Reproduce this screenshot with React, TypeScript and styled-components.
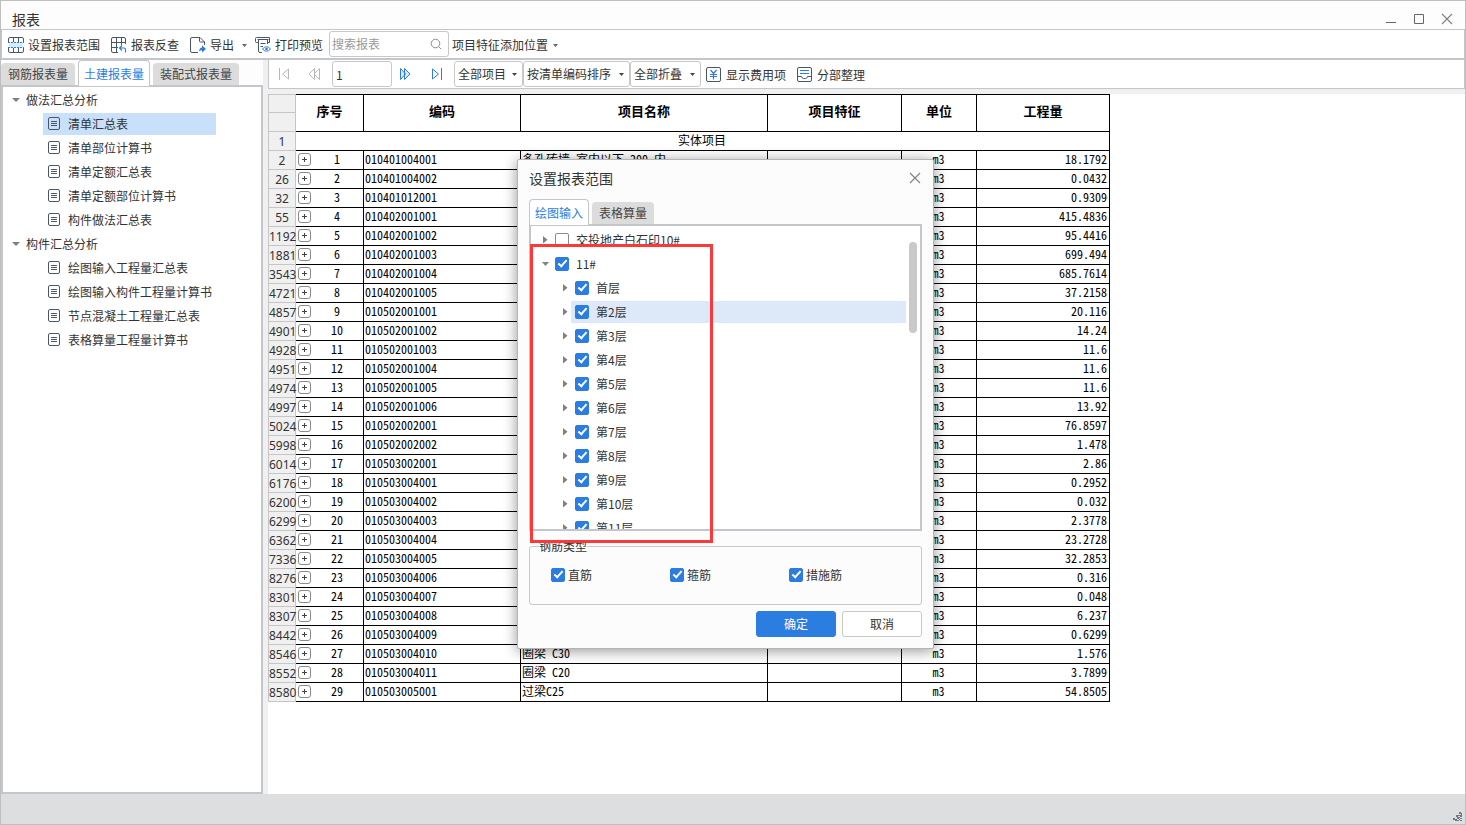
import React from 'react';
import styled, { createGlobalStyle, css } from 'styled-components';

const line = '#c5c6cc';
const blue = '#2b7de1';
const ink = '#4a5568';

const GlobalStyle = createGlobalStyle`
  *, *::before, *::after { box-sizing: border-box; }
  body { margin: 0; }
  body, button, input, select {
    font-family: "Noto Sans CJK SC", "Noto Sans", sans-serif;
    font-size: 12px;
    line-height: 18px;
    color: #333;
  }
`;

const Window = styled.div`
  position: relative;
  display: flex;
  flex-direction: column;
  min-height: 100vh;
  border: 1px solid #bfbfbf;
  background: #fdfdfd;
`;

const TitleBar = styled.header`
  display: flex;
  align-items: center;
  justify-content: space-between;
  height: 28px;
  padding: 8px 12px 0 11px;
`;

const WindowTitle = styled.h1`
  margin: 0;
  font-size: 14px;
  font-weight: 400;
  line-height: 20px;
`;

const WindowButtons = styled.div`
  display: flex;
  gap: 16px;
`;

const IconButton = styled.button`
  display: flex;
  padding: 0;
  border: 0;
  background: none;
`;

const Toolbar = styled.div`
  display: flex;
  align-items: center;
  height: 31px;
  padding: 0 6px;
  border: 1px solid ${line};
  border-bottom-width: 2px;
  background: #fff;
`;

const ToolButton = styled.button<{ $gap?: number; $after?: number }>`
  display: flex;
  align-items: center;
  gap: ${p => p.$gap ?? 4}px;
  margin-right: ${p => p.$after ?? 11}px;
  padding: 2px 0 0;
  border: 0;
  background: none;
  white-space: nowrap;
`;

const SearchBox = styled.label`
  display: flex;
  align-items: center;
  width: 120px;
  height: 26px;
  margin-right: 3px;
  padding: 0 6px 0 2px;
  border: 1px solid #c8c8c8;
  border-radius: 3px;
  background: #fff;
`;

const SearchInput = styled.input`
  flex: 1;
  min-width: 0;
  padding: 0;
  border: 0;
  outline: 0;
  background: none;
  &::placeholder { color: #9a9a9a; opacity: 1; }
`;

const Body = styled.div`
  display: flex;
  flex: 1;
  background: #f0f0f0;
`;

const Sidebar = styled.aside`
  display: flex;
  flex-direction: column;
  flex: 0 0 262px;
  margin-right: 5px;
  background: #fdfdfd;
`;

const TabList = styled.div`
  display: flex;
  align-items: flex-end;
  gap: 3px;
  height: 25px;
`;

const Tab = styled.button<{ $active?: boolean }>`
  height: 22px;
  padding: 0 7px;
  border: 0;
  border-radius: 4px 4px 0 0;
  background: #dcdcdc;
  color: #444;
  white-space: nowrap;
  ${p => p.$active && css`
    position: relative;
    height: 26px;
    margin-bottom: -1px;
    padding: 0 5px;
    border: 1px solid ${line};
    border-bottom: 0;
    background: #fff;
    color: ${blue};
  `}
`;

const TreePanel = styled.nav`
  flex: 1;
  padding: 1px 0;
  border: 2px solid ${line};
  background: #fff;
`;

const TreeGroup = styled.div`
  display: flex;
  align-items: center;
  gap: 6px;
  height: 24px;
  padding-left: 9px;
`;

const TreeList = styled.ul`
  margin: 0;
  padding: 0 45px 0 40px;
  list-style: none;
`;

const TreeLink = styled.a<{ $active?: boolean }>`
  display: flex;
  align-items: center;
  gap: 7px;
  height: 22px;
  margin: 1px 0;
  padding-left: 5px;
  color: #333;
  text-decoration: none;
  white-space: nowrap;
  background: ${p => (p.$active ? '#c9e0fa' : 'transparent')};
`;

const TreeItem = styled.li`
  display: flow-root;
`;

const Main = styled.main`
  display: flex;
  flex-direction: column;
  flex: 1;
  min-width: 0;
`;

const PagerBar = styled.div`
  display: flex;
  align-items: center;
  height: 29px;
  margin-bottom: 5px;
  padding-left: 8px;
  border: 1px solid ${line};
  border-top: 0;
  background: #fff;
`;

const PageInput = styled.input`
  width: 60px;
  height: 26px;
  margin: 0 6px 0 11px;
  padding: 0 3px;
  border: 1px solid #c8c8c8;
  border-radius: 3px;
`;

const PagerButton = styled(IconButton)<{ $after?: number }>`
  justify-content: center;
  width: 15px;
  margin-right: ${p => p.$after ?? 16}px;
`;

const Filters = styled.div`
  display: flex;
  margin-right: 5px;
`;

const SelectBox = styled.span<{ $width: number }>`
  position: relative;
  width: ${p => p.$width}px;
  height: 26px;
  > svg { position: absolute; right: 6px; top: 12px; pointer-events: none; }
`;

const Select = styled.select`
  appearance: none;
  width: 100%;
  height: 26px;
  padding: 0 3px;
  border: 1px solid #c8c8c8;
  border-radius: 3px;
  background: #fff;
`;

const Sheet = styled.section`
  flex: 1;
  background: #fff;
`;

const Grid = styled.table`
  table-layout: fixed;
  width: 842px;
  border-spacing: 0;
  color: #000;
  font-feature-settings: "hwid";
  line-height: 16px;
  tr { height: 19px; }
`;

const Cell = styled.td<{ $align?: string }>`
  padding: 0 2px 2px 1px;
  border-right: 1px solid #000;
  border-bottom: 1px solid #000;
  text-align: ${p => p.$align ?? 'left'};
  white-space: nowrap;
`;

const HeadCell = styled.th`
  padding: 0 0 4px;
  border: solid #000;
  border-width: 1px 1px 1px 0;
  font-size: 13px;
`;

const RowNumber = styled.th<{ $first?: boolean }>`
  padding: 2px 0 0;
  border: solid #c6c6c6;
  border-width: ${p => (p.$first ? 1 : 0)}px 1px 1px 1px;
  background: #f0f0f0;
  color: #333;
  font-family: "Noto Sans", sans-serif;
  font-weight: 400;
`;

const Ordinal = styled.div`
  display: flex;
  align-items: center;
  padding-left: 1px;
  span { flex: 1; padding-left: 2px; text-align: center; }
`;

const ExpandButton = styled.button`
  display: flex;
  align-items: center;
  justify-content: center;
  width: 13px;
  height: 13px;
  margin-top: 1px;
  padding: 0;
  border: 1px solid #8a8a8a;
  border-radius: 3px;
  background: #fff;
`;

const StatusBar = styled.footer`
  display: flex;
  justify-content: flex-end;
  align-items: flex-end;
  height: 30px;
  padding: 2px;
  background: #dddee0;
`;

const Dialog = styled.div`
  position: absolute;
  left: calc(50% - 216px);
  top: 158px;
  display: flex;
  flex-direction: column;
  width: 417px;
  padding: 0 11px 11px;
  border: 1px solid #b4b4b4;
  border-radius: 2px;
  background: #fcfcfc;
  box-shadow: 0 2px 14px rgba(0, 0, 0, 0.42);
`;

const DialogHeader = styled.div`
  display: flex;
  align-items: center;
  justify-content: space-between;
  height: 39px;
  padding: 0 1px 4px 0;
`;

const DialogTitle = styled.h2`
  margin: 0;
  font-size: 14px;
  font-weight: 400;
  line-height: 20px;
`;

const FloorPanel = styled.div`
  display: flex;
  height: 307px;
  padding: 2px 3px 0 0;
  border: 2px solid ${line};
  background: #fff;
  overflow: hidden;
`;

const FloorList = styled.ul`
  flex: 1;
  margin: 0;
  padding: 0;
  list-style: none;
`;

const FloorRow = styled.li<{ $level: number }>`
  display: flex;
  align-items: center;
  gap: 2px;
  height: 24px;
  padding-left: ${p => p.$level * 20 + 11}px;
`;

const FloorLabel = styled.label<{ $active?: boolean }>`
  display: flex;
  flex: 1;
  align-items: center;
  gap: 7px;
  height: 22px;
  padding-left: 4px;
  background: ${p => (p.$active ? '#dde9f9' : 'transparent')};
`;

const Checkbox = styled.input.attrs({ type: 'checkbox' })`
  appearance: none;
  width: 14px;
  height: 14px;
  margin: 0;
  border: 1px solid #8a8a8a;
  border-radius: 2px;
  background: #fff;
  &:checked {
    border-color: ${blue};
    background: ${blue};
  }
  &:checked::after {
    content: '';
    display: block;
    width: 5px;
    height: 9px;
    margin: 0 0 0 4px;
    border: solid #fff;
    border-width: 0 2px 2px 0;
    transform: rotate(42deg);
  }
`;

const ScrollThumb = styled.div`
  width: 8px;
  height: 91px;
  margin: 14px 0 0 3px;
  border-radius: 4px;
  background: #c9c9c9;
`;

const RebarTypes = styled.fieldset`
  display: flex;
  min-width: 0;
  height: 68px;
  margin: 6px 0;
  padding: 11px 0 0 21px;
  border: 1px solid #c8c8c8;
  border-radius: 3px;
  background: transparent;
`;

const Legend = styled.legend`
  margin-left: -12px;
  padding: 0;
`;

const RebarLabel = styled.label`
  display: flex;
  align-items: center;
  gap: 3px;
  width: 119px;
  height: 18px;
`;

const DialogActions = styled.div`
  display: flex;
  justify-content: flex-end;
  gap: 6px;
`;

const ActionButton = styled.button<{ $primary?: boolean }>`
  width: 80px;
  height: 26px;
  padding: 0;
  border: 1px solid ${p => (p.$primary ? blue : '#c8c8c8')};
  border-radius: 3px;
  background: ${p => (p.$primary ? blue : '#fff')};
  color: ${p => (p.$primary ? '#fff' : '#333')};
`;

const Highlight = styled.div`
  position: absolute;
  left: 12px;
  top: 84px;
  width: 183px;
  height: 299px;
  border: 3px solid #fd3838;
  pointer-events: none;
`;

const CaretDown = ({ size = 5, color = '#666' }: { size?: number; color?: string }) => (
  <svg width={size} height={size === 5 ? 3 : 4} viewBox="0 0 8 4" preserveAspectRatio="none">
    <path d="M0 0h8L4 4z" fill={color} />
  </svg>
);

const CaretRight = () => (
  <svg width="7" height="8" viewBox="0 0 7 8"><path d="M1 0v7.500l4.500-3.750z" fill="#808080" /></svg>
);

const CaretOpen = () => (
  <svg width="7" height="8" viewBox="0 0 7 8"><path d="M0 2h7L3.500 6z" fill="#808080" /></svg>
);

const Cross = () => (
  <svg width="12" height="12" viewBox="0 0 12 12"><path d="M1 1l10 10M11 1L1 11" stroke="#808080" strokeWidth="1.100" /></svg>
);

const RangeIcon = () => (
  <svg width="16" height="16" viewBox="0 0 16 16" fill="none">
    <path d="M1 5h14v6H1z" fill="#dcebfc" />
    <path d="M.5 5V2Q.5.5 2 .5h12q1.500 0 1.500 1.500v3M.5 11v3q0 1.500 1.500 1.500h12q1.500 0 1.500-1.500v-3M5.500.5V5M10.500.5V5M5.500 11v4.500M10.500 11v4.500" stroke={ink} />
    <path d="M0 5.500h16M0 10.500h16" stroke={blue} strokeDasharray="2 1" />
  </svg>
);

const LookupIcon = () => (
  <svg width="16" height="16" viewBox="0 0 16 16" fill="none">
    <path d="M14.500 7V2Q14.500.5 13 .5H2Q.5.5.5 2v12q0 1.500 1.500 1.500h5M.5 5.500h14M.5 10.500H7M5.500.5v15M10.500.5V8" stroke={ink} />
    <path d="M11 8.500L8.500 11l2.500 2.500M9 11h4q1.500 0 1.500 1.500v3" stroke={blue} strokeWidth="1.200" />
  </svg>
);

const ExportIcon = () => (
  <svg width="16" height="16" viewBox="0 0 16 16" fill="none">
    <path d="M8 15.500H2Q.5 15.500.5 14V2Q.5.5 2 .5h8L14.500 5v3M9.500.5V4q0 1 1 1h4" stroke={ink} />
    <path d="M9 14.500q.5-4 3-4V8.300l4 3.700-4 3.500v-2.300q-1.800 0-3 1.300z" fill={blue} />
  </svg>
);

const PreviewIcon = () => (
  <svg width="16" height="16" viewBox="0 0 16 16" fill="none">
    <path d="M3 5.500H1.500Q.5 5.500.5 4.500v-3q0-1 1-1h13v5H12M3.500 3v11q0 1.500 1.500 1.500h2M12.500 3v4M2.500 2.500h11M5.500 6.500h5M5.500 9.500H8" stroke={ink} />
    <path d="M7.500 12q4-4.500 8 0-4 4.500-8 0z" fill="#fff" stroke={blue} />
    <circle cx="11.500" cy="12" r="1.300" fill={blue} />
  </svg>
);

const FeeIcon = () => (
  <svg width="16" height="16" viewBox="0 0 16 16" fill="none">
    <rect x=".5" y=".5" width="14" height="14" rx="1.500" stroke={ink} />
    <path d="M4.500 3l3 3.500 3-3.500M7.500 6.500v6M4 7.500h7M4 9.500h7" stroke={blue} strokeWidth="1.200" />
  </svg>
);

const ArrangeIcon = () => (
  <svg width="16" height="16" viewBox="0 0 16 16" fill="none">
    <rect x=".5" y=".5" width="14" height="14" rx="1.500" stroke={ink} />
    <path d="M.5 9.500h4q.5 2 2 2h2q1.500 0 2-2h4" stroke={ink} />
    <path d="M3 3.500h9M3 6.500h9" stroke={blue} strokeWidth="1.200" />
  </svg>
);

const SheetIcon = () => (
  <svg width="13" height="15" viewBox="0 0 13 15" fill="none" stroke={ink}>
    <rect x=".5" y=".5" width="11" height="12" rx="1.500" />
    <path d="M3 4.500h6M3 6.500h6M3 8.500h6" />
  </svg>
);

const SearchIcon = () => (
  <svg width="12" height="12" viewBox="0 0 12 12" fill="none" stroke="#8c8c8c">
    <circle cx="5.500" cy="5.500" r="4.300" />
    <path d="M8.700 8.700l2.300 2.300" />
  </svg>
);

const NavIcon = ({ kind }: { kind: 'first' | 'prev' | 'next' | 'last' }) => {
  const back = kind === 'first' || kind === 'prev';
  return (
    <svg width="13" height="14" viewBox="0 0 13 14" fill="none" stroke={back ? '#b8b8b8' : blue}>
      {kind === 'first' && <path d="M1.500 1v12M10.500 2v10L4.500 7z" />}
      {kind === 'prev' && <path d="M6.500 1.500L1 7l5.500 5.500zM11.500 1.500L6 7l5.500 5.500z" />}
      {kind === 'next' && <path d="M1.500 1.500v11L6.500 7zM5.500 1.500L11 7l-5.500 5.500z" fill="#dcebfc" />}
      {kind === 'last' && <path d="M11.500 1v12M2.500 2v10L8.500 7z" />}
    </svg>
  );
};

const Grip = () => (
  <svg width="10" height="10" viewBox="0 0 10 10">
    <path d="M6 0h2v2H6zM8 1h1v2H8zM5 3h2v1H5zM3 3h2v2H3zM7 3h2v2H7zM4 5h2v2H4zM6 5h1v1H6zM7 6h2v1H7zM0 6h2v2H0zM2 7h2v2H2zM4 8h2v1H4zM6 7h1v1H6zM7 8h2v1H7z" fill="#6d7785" />
  </svg>
);

const groups = [
  { name: '做法汇总分析', items: ['清单汇总表', '清单部位计算书', '清单定额汇总表', '清单定额部位计算书', '构件做法汇总表'] },
  { name: '构件汇总分析', items: ['绘图输入工程量汇总表', '绘图输入构件工程量计算书', '节点混凝土工程量汇总表', '表格算量工程量计算书'] },
];

const rows: [string, string, string, string?][] = [
  ['2', '010401004001', '18.1792', '多孔砖墙 室内以下 200 内'],
  ['26', '010401004002', '0.0432'],
  ['32', '010401012001', '0.9309'],
  ['55', '010402001001', '415.4836'],
  ['1192', '010402001002', '95.4416'],
  ['1881', '010402001003', '699.494'],
  ['3543', '010402001004', '685.7614'],
  ['4721', '010402001005', '37.2158'],
  ['4857', '010502001001', '20.116'],
  ['4901', '010502001002', '14.24'],
  ['4928', '010502001003', '11.6'],
  ['4951', '010502001004', '11.6'],
  ['4974', '010502001005', '11.6'],
  ['4997', '010502001006', '13.92'],
  ['5024', '010502002001', '76.8597'],
  ['5998', '010502002002', '1.478'],
  ['6014', '010503002001', '2.86'],
  ['6176', '010503004001', '0.2952'],
  ['6200', '010503004002', '0.032'],
  ['6299', '010503004003', '2.3778'],
  ['6362', '010503004004', '23.2728'],
  ['7336', '010503004005', '32.2853'],
  ['8276', '010503004006', '0.316'],
  ['8301', '010503004007', '0.048'],
  ['8307', '010503004008', '6.237'],
  ['8442', '010503004009', '0.6299'],
  ['8546', '010503004010', '1.576', '圈梁 C30'],
  ['8552', '010503004011', '3.7899', '圈梁 C20'],
  ['8580', '010503005001', '54.8505', '过梁C25'],
];

const floors = ['首层', '第2层', '第3层', '第4层', '第5层', '第6层', '第7层', '第8层', '第9层', '第10层', '第11层'];

const DropDown = ({ label, width }: { label: string; width: number }) => (
  <SelectBox $width={width}>
    <Select aria-label={label}><option>{label}</option></Select>
    <CaretDown color="#444" />
  </SelectBox>
);

const ReportSidebar = () => (
  <Sidebar>
    <TabList role="tablist">
      <Tab role="tab">钢筋报表量</Tab>
      <Tab role="tab" aria-selected $active>土建报表量</Tab>
      <Tab role="tab">装配式报表量</Tab>
    </TabList>
    <TreePanel>
      {groups.map(group => (
        <React.Fragment key={group.name}>
          <TreeGroup><CaretDown size={8} color="#808080" />{group.name}</TreeGroup>
          <TreeList>
            {group.items.map(item => (
              <TreeItem key={item}>
                <TreeLink href="#" $active={item === '清单汇总表'}><SheetIcon />{item}</TreeLink>
              </TreeItem>
            ))}
          </TreeList>
        </React.Fragment>
      ))}
    </TreePanel>
  </Sidebar>
);

const ReportTable = () => (
  <Grid>
    <colgroup>
      {[28, 68, 157, 247, 134, 75, 133].map((w, i) => <col key={i} width={w} />)}
    </colgroup>
    <thead>
      <tr>
        <RowNumber $first />
        {['序号', '编码', '项目名称', '项目特征', '单位', '工程量'].map(h => <HeadCell key={h} rowSpan={2}>{h}</HeadCell>)}
      </tr>
      <tr><RowNumber /></tr>
    </thead>
    <tbody>
      <tr>
        <RowNumber>1</RowNumber>
        <Cell colSpan={6} $align="center">实体项目</Cell>
      </tr>
      {rows.map(([no, code, amount, name], i) => (
        <tr key={code}>
          <RowNumber>{no}</RowNumber>
          <Cell>
            <Ordinal>
              <ExpandButton aria-label="展开">
                <svg width="5" height="5" viewBox="0 0 5 5"><path d="M0 2.500h5M2.500 0v5" stroke="#444" /></svg>
              </ExpandButton>
              <span>{i + 1}</span>
            </Ordinal>
          </Cell>
          <Cell>{code}</Cell>
          <Cell>{name}</Cell>
          <Cell />
          <Cell $align="center">m3</Cell>
          <Cell $align="right">{amount}</Cell>
        </tr>
      ))}
    </tbody>
  </Grid>
);

const RangeDialog = () => (
  <Dialog role="dialog" aria-label="设置报表范围">
    <DialogHeader>
      <DialogTitle>设置报表范围</DialogTitle>
      <IconButton aria-label="关闭"><Cross /></IconButton>
    </DialogHeader>
    <TabList role="tablist">
      <Tab role="tab" aria-selected $active>绘图输入</Tab>
      <Tab role="tab">表格算量</Tab>
    </TabList>
    <FloorPanel>
      <FloorList>
        <FloorRow $level={0}><CaretRight /><FloorLabel><Checkbox />交投地产白石印10#</FloorLabel></FloorRow>
        <FloorRow $level={0}><CaretOpen /><FloorLabel><Checkbox defaultChecked />11#</FloorLabel></FloorRow>
        {floors.map(floor => (
          <FloorRow key={floor} $level={1}>
            <CaretRight />
            <FloorLabel $active={floor === '第2层'}><Checkbox defaultChecked />{floor}</FloorLabel>
          </FloorRow>
        ))}
      </FloorList>
      <ScrollThumb />
    </FloorPanel>
    <RebarTypes>
      <Legend>钢筋类型</Legend>
      {['直筋', '箍筋', '措施筋'].map(type => (
        <RebarLabel key={type}><Checkbox defaultChecked />{type}</RebarLabel>
      ))}
    </RebarTypes>
    <DialogActions>
      <ActionButton $primary>确定</ActionButton>
      <ActionButton>取消</ActionButton>
    </DialogActions>
    <Highlight />
  </Dialog>
);

export default function App() {
  return (
    <Window>
      <GlobalStyle />
      <TitleBar>
        <WindowTitle>报表</WindowTitle>
        <WindowButtons>
          <IconButton aria-label="最小化">
            <svg width="12" height="12" viewBox="0 0 12 12"><path d="M1 9.500h10" stroke="#666" /></svg>
          </IconButton>
          <IconButton aria-label="最大化">
            <svg width="12" height="12" viewBox="0 0 12 12"><path d="M1.500 1.500h9v9h-9z" fill="none" stroke="#666" /></svg>
          </IconButton>
          <IconButton aria-label="关闭"><Cross /></IconButton>
        </WindowButtons>
      </TitleBar>
      <Toolbar>
        <ToolButton><RangeIcon />设置报表范围</ToolButton>
        <ToolButton><LookupIcon />报表反查</ToolButton>
        <ToolButton $after={8}><ExportIcon />导出</ToolButton>
        <ToolButton aria-label="更多导出" $after={8}><CaretDown /></ToolButton>
        <ToolButton $after={6}><PreviewIcon />打印预览</ToolButton>
        <SearchBox>
          <SearchInput type="text" placeholder="搜索报表" aria-label="搜索报表" />
          <SearchIcon />
        </SearchBox>
        <ToolButton $gap={5}>项目特征添加位置<CaretDown /></ToolButton>
      </Toolbar>
      <Body>
        <ReportSidebar />
        <Main>
          <PagerBar>
            <PagerButton aria-label="首页"><NavIcon kind="first" /></PagerButton>
            <IconButton aria-label="上一页"><NavIcon kind="prev" /></IconButton>
            <PageInput defaultValue="1" aria-label="页码" />
            <PagerButton aria-label="下一页"><NavIcon kind="next" /></PagerButton>
            <PagerButton aria-label="末页" $after={10}><NavIcon kind="last" /></PagerButton>
            <Filters>
              <DropDown label="全部项目" width={69} />
              <DropDown label="按清单编码排序" width={107} />
              <DropDown label="全部折叠" width={71} />
            </Filters>
            <ToolButton><FeeIcon />显示费用项</ToolButton>
            <ToolButton><ArrangeIcon />分部整理</ToolButton>
          </PagerBar>
          <Sheet><ReportTable /></Sheet>
        </Main>
      </Body>
      <StatusBar><Grip /></StatusBar>
      <RangeDialog />
    </Window>
  );
}
